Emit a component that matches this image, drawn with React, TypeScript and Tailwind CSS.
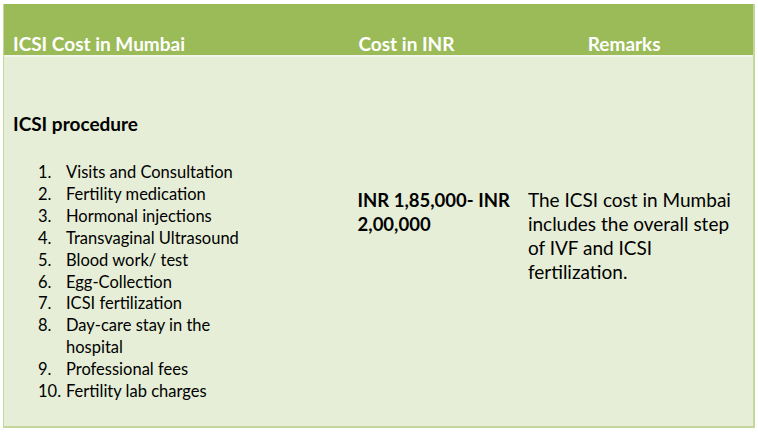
import React from "react";

const items = [
  "Visits and Consultation",
  "Fertility medication",
  "Hormonal injections",
  "Transvaginal Ultrasound",
  "Blood work/ test",
  "Egg-Collection",
  "ICSI fertilization",
  "Day-care stay in the hospital",
  "Professional fees",
  "Fertility lab charges",
];

export default function App() {
  return (
    <div className="w-[758px] h-[432px] bg-white pt-[4px] pl-[3px]" style={{ fontFamily: "Lato, 'Open Sans', sans-serif" }}>
      <div className="w-[752px] border-r-2 border-b-2 border-l border-[#c3d69b]">
        <div className="flex h-[51px] items-end bg-[#9bbb59] pb-[0px] text-[19px] font-bold text-white leading-[22px]">
          <div className="w-[347px] pl-[9px]">ICSI Cost in Mumbai</div>
          <div className="w-[171px] pl-[9px]">Cost in INR</div>
          <div className="w-[234px] pl-[68px]">Remarks</div>
        </div>
        <div className="h-[2px] bg-[#f1f5ea]" />
        <div className="flex h-[369px] bg-[#e6eed7] text-black">
          <div className="w-[347px] pl-[9px] pt-[56px]">
            <div className="text-[19px] font-bold leading-[22px]">ICSI procedure</div>
            <ol className="mt-[27px] text-[16.5px] leading-[21.9px]">
              {items.map((t, i) => (
                <li key={i} className="flex">
                  <span className="w-[53px] shrink-0 pl-[25px]">{i + 1}.</span>
                  <span className="w-[180px]">{t}</span>
                </li>
              ))}
            </ol>
          </div>
          <div className="w-[171px] pl-[8px] pt-[131px] text-[18.5px] font-bold leading-[24px]">
            INR 1,85,000- INR 2,00,000
          </div>
          <div className="w-[234px] pl-[8px] pt-[131px] pr-[12px] text-[19px] leading-[24px]">
            The ICSI cost in Mumbai includes the overall step of IVF and ICSI fertilization.
          </div>
        </div>
      </div>
    </div>
  );
}
